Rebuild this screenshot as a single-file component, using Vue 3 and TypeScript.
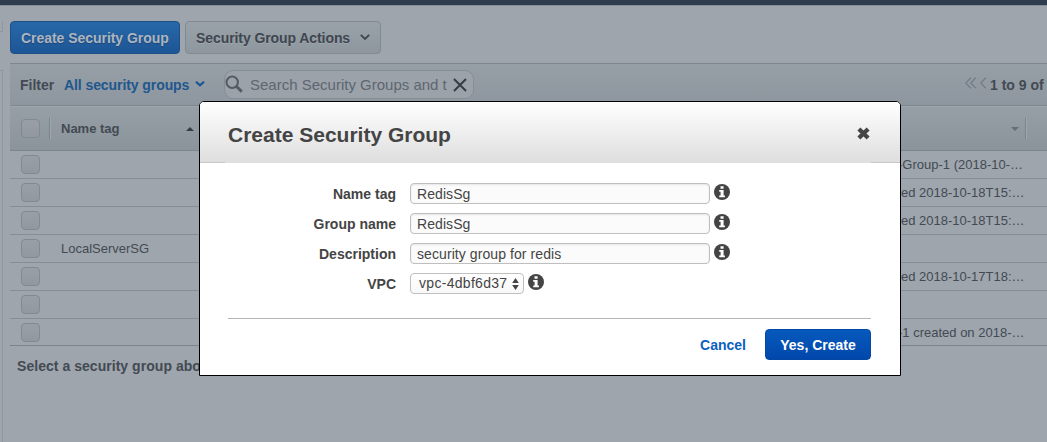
<script setup lang="ts">
import { ref } from 'vue'

interface Row { name: string; description: string }
interface Field { label: string; value: string; select?: boolean }

const rows = ref<Row[]>([
  { name: '', description: '-Group-1 (2018-10-…' },
  { name: '', description: 'ed 2018-10-18T15:…' },
  { name: '', description: 'ed 2018-10-18T15:…' },
  { name: 'LocalServerSG', description: '' },
  { name: '', description: 'ed 2018-10-17T18:…' },
  { name: '', description: '' },
  { name: '', description: '-1 created on 2018-…' },
])

const fields = ref<Field[]>([
  { label: 'Name tag', value: 'RedisSg' },
  { label: 'Group name', value: 'RedisSg' },
  { label: 'Description', value: 'security group for redis' },
  { label: 'VPC', value: 'vpc-4dbf6d37', select: true },
])
</script>

<template>
  <div class="page">
    <div class="topbar"></div>
    <div class="body">
      <aside class="side"><div class="side-top"></div><div class="side-rest"></div></aside>
      <main class="main">
        <div class="toolbar">
          <button class="btn primary"><span>Create Security Group</span></button>
          <button class="btn plain">
            <span>Security Group Actions</span>
            <svg class="caret" width="10" height="7" viewBox="0 0 10 7"><path d="M.8 .8 5 5 9.2 .8" fill="none" stroke="#3e464f" stroke-width="1.8" /></svg>
          </button>
        </div>
        <div class="filter">
          <span class="filter-label">Filter</span>
          <span class="filter-value">All security groups</span>
          <svg class="filter-caret" width="10" height="6" viewBox="0 0 10 6"><path d="M1 .7 5 4.3 9 .7" fill="none" stroke="#185493" stroke-width="2" /></svg>
          <div class="search">
            <svg class="glass" width="19" height="19" viewBox="0 0 19 19"><circle cx="7.2" cy="7.2" r="5.7" fill="none" stroke="#535b63" stroke-width="2" /><path d="m11.5 11.5 5.3 5.1" stroke="#535b63" stroke-width="3" /></svg>
            <span class="search-text">Search Security Groups and t</span>
            <svg class="clear" width="14" height="14" viewBox="0 0 14 14"><path d="m1 1 12 12M13 1 1 13" stroke="#343c46" stroke-width="2" /></svg>
          </div>
          <div class="pager">
            <svg width="22" height="12" viewBox="0 0 22 12"><path d="M5.8 .8.8 6l5 5.2M10.8 .8l-5 5.2 5 5.2M20.8 .8l-5 5.2 5 5.2" fill="none" stroke="#747d86" stroke-width="1.3" /></svg>
            <span>1 to 9 of</span>
          </div>
        </div>
        <div class="thead">
          <i class="check"></i>
          <i class="divider first"></i>
          <span class="th">Name tag</span>
          <i class="sort-up"></i>
          <span class="grow"></span>
          <i class="sort-down"></i>
          <i class="divider last"></i>
        </div>
        <div v-for="(row, i) in rows" :key="i" class="row">
          <i class="check"></i>
          <span class="name">{{ row.name }}</span>
          <span class="desc" :class="{ dash: row.description.startsWith('-') }">{{ row.description }}</span>
        </div>
        <p class="hint">Select a security group above</p>
      </main>
    </div>

    <section class="modal">
      <header class="modal-head">
        <h1>Create Security Group</h1>
        <svg class="close" width="13" height="13" viewBox="0 0 13 13"><path d="m1.9 1.9 9.2 9.2M11.1 1.9 1.9 11.1" stroke="#444" stroke-width="4.2" /></svg>
      </header>
      <div class="head-rule"><i></i><i></i></div>
      <div class="form">
        <div v-for="field in fields" :key="field.label" class="field">
          <label>{{ field.label }}</label>
          <div class="control" :class="{ select: field.select }">
            <span>{{ field.value }}</span>
            <svg v-if="field.select" width="7" height="12" viewBox="0 0 7 12"><path d="M3.5 0 6.8 5H.2zM3.5 12 .2 7h6.6z" fill="#444" /></svg>
          </div>
          <svg class="info" width="16" height="16" viewBox="0 0 16 16">
            <circle cx="8" cy="8" r="8" fill="#444" />
            <path d="M6.5 2.2h3.1v2.5H6.5zM5.2 6h4.4v5.4h1.3v1.9H5.2v-1.9h1.4V7.8H5.2z" fill="#fff" />
          </svg>
        </div>
      </div>
      <footer class="actions">
        <a class="cancel">Cancel</a>
        <button class="confirm">Yes, Create</button>
      </footer>
    </section>
  </div>
</template>

<style>
html, body { margin: 0; overflow: hidden; }
</style>

<style scoped>
* { box-sizing: border-box; }
.page { position: relative; width: 1047px; height: 442px; overflow: hidden; background: #9ea5ad; color: #434a53; font-family: "Liberation Sans", Arial, sans-serif; font-size: 14px; display: flex; flex-direction: column; white-space: nowrap; }
.topbar { height: 6px; flex: none; background: #303d4f; border-bottom: 1px solid #858e98; }
.body { flex: 1; display: flex; min-height: 0; }
.side { width: 10px; flex: none; display: flex; flex-direction: column; padding-top: 15px; gap: 38px; }
.side-top { width: 3px; height: 11px; border: solid #8e969e; border-width: 0 1px 1px 0; }
.side-rest { width: 3px; flex: 1; border: solid #8e969e; border-width: 1px 1px 0 0; }
.main { flex: 1; min-width: 0; }
.toolbar { display: flex; gap: 5px; padding-top: 15px; height: 57px; }
button { font-family: inherit; font-size: 14px; font-weight: bold; margin: 0; }
.btn { height: 33px; border-radius: 4px; padding: 0 0 0 10px; display: flex; align-items: center; justify-content: flex-start; line-height: 16px; }
.primary { width: 170px; border: 1px solid #1e5087; background: linear-gradient(#2868a8, #1d5696); color: #abb5c1; letter-spacing: -.04px; text-shadow: 0 1px 1px #214773; }
.plain { width: 196px; border: 1px solid #818991; background: linear-gradient(#99a1a9, #8e969e); color: #3e464f; letter-spacing: -.08px; text-shadow: 0 1px 0 #9fa7af; }
.plain span { width: 164px; text-align: left; }
.caret { flex: none; }
.filter { display: flex; align-items: center; height: 43px; border: solid #7e8790; border-width: 1px 0; background: linear-gradient(#969ea6, #8e969f); padding-left: 10px; font-weight: bold; }
.filter > * { flex: none; }
.filter-label { width: 44px; }
.filter-value { width: 131px; color: #20578d; letter-spacing: -.08px; }
.filter-caret { margin-right: 19px; margin-top: -1px; }
.search { width: 250px; height: 29px; border: 1px solid #858d95; border-radius: 9px; background: #9ba2aa; display: flex; align-items: center; font-weight: normal; color: #5e666f; overflow: hidden; }
.glass { flex: none; margin-right: 6px; }
.search-text { width: 203px; font-size: 15px; }
.clear { flex: none; }
.pager { margin-left: 491px; display: flex; align-items: center; gap: 3px; }
.pager svg { margin-top: -3px; flex: none; }
.thead { display: flex; align-items: center; height: 45px; border-top: 1px solid #9ea6ae; border-bottom: 1px solid #7d868e; background: linear-gradient(#969ea6, #8b939b); padding-left: 11px; font-size: 13px; font-weight: bold; }
.check { display: block; flex: none; width: 19px; height: 19px; border: 1px solid #818991; border-radius: 4px; background: linear-gradient(#989fa7, #9198a0); }
.divider { width: 2px; height: 21px; border-left: 1px solid #7c858e; border-right: 1px solid #a0a8af; }
.first { margin: 0 10px 0 9px; }
.th { width: 125px; }
.sort-up { border: solid transparent; border-width: 0 4px 4px; border-bottom-color: #343c45; }
.grow { flex: 1; }
.sort-down { border: solid transparent; border-width: 4px 4px 0; border-top-color: #656e77; }
.last { margin: 0 20px 0 6px; }
.row { display: flex; align-items: center; height: 28px; border-bottom: 1px solid #858e96; padding-left: 11px; font-size: 13px; }
.row:nth-last-child(2) { height: 27px; border-color: #7c858d; }
.name { margin-left: 21px; width: 840px; flex: none; }
.dash { margin-left: -3px; }
.hint { margin: 12px 0 0 7px; line-height: 17px; font-weight: bold; letter-spacing: .04px; }

.modal { position: absolute; left: 199px; top: 101px; width: 702px; height: 275px; background: #fff; border: 1px solid #000; border-radius: 5px 5px 0 0; color: #444; overflow: hidden; }
.modal-head { height: 61px; background: linear-gradient(#fff, #dedede); display: flex; align-items: center; justify-content: space-between; padding: 3px 30px 0 28px; }
h1 { margin: 2px 0 0; font-size: 21px; line-height: 24px; }
.close { margin-top: -1px; }
.head-rule { display: flex; justify-content: space-between; height: 1px; margin-top: -1px; }
.head-rule i { width: 25px; background: #c8c8c8; }
.head-rule i:last-child { width: 29px; }
.form { padding: 20px 0 0 28px; height: 155px; }
.field { display: flex; height: 30px; }
label { width: 168px; margin-right: 14px; text-align: right; font-weight: bold; line-height: 23px; }
.control { width: 300px; height: 21px; border: 1px solid #bfbfbf; border-radius: 4px; background: #fbfbfb; box-shadow: inset 0 1px 2px #e5e5e5; padding: 1px 0 0 6px; line-height: 20px; letter-spacing: .08px; display: flex; align-items: center; }
.select { width: 114px; padding: 0 0 0 8px; line-height: 19px; box-shadow: none; background: linear-gradient(#fff, #f8f8f8); }
.select span { width: 93px; letter-spacing: .3px; }
.info { margin-left: 4px; margin-top: 1px; }
.actions { margin: 0 29px 0 28px; border-top: 1px solid #b5b5b5; display: flex; justify-content: flex-end; align-items: center; padding-top: 10px; }
.cancel { color: #0a61c0; font-weight: bold; margin-right: 19px; }
.confirm { width: 106px; height: 31px; border: 1px solid #0248a5; border-radius: 4px; background: linear-gradient(#0759bd, #0147ab); color: #fff; padding: 0; }
</style>
